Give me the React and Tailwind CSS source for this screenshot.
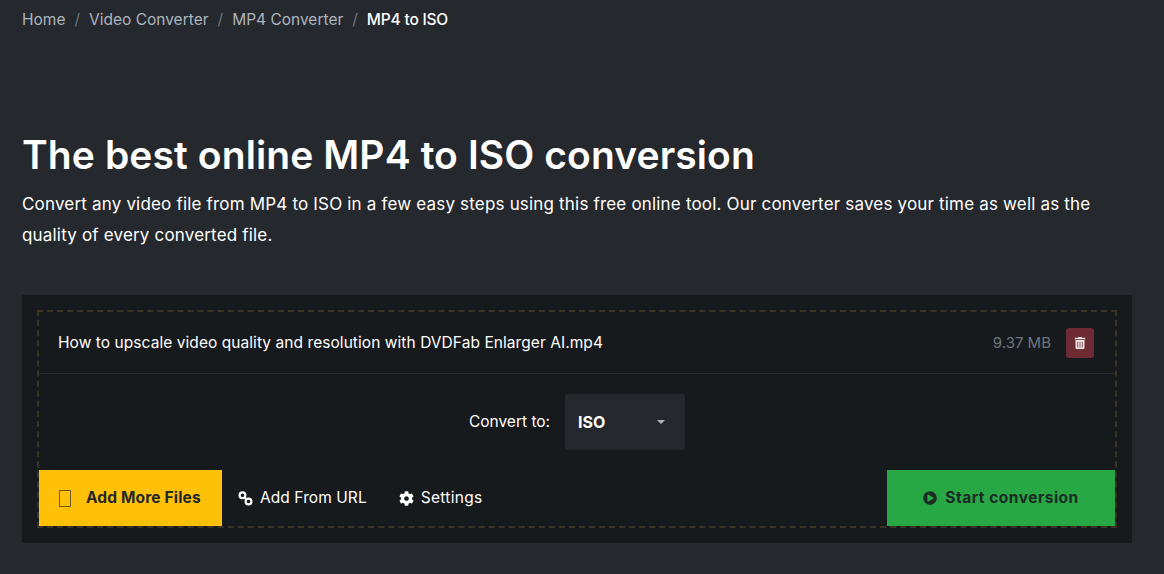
import { FaCog, FaPlayCircle, FaTrashAlt } from "react-icons/fa";

function LinkIcon() {
  return (
    <svg viewBox="0 0 16 16" className="w-[15px] h-[15px]" fill="none" stroke="currentColor" strokeWidth="2.3">
      <circle cx="4.8" cy="4.6" r="3.1" />
      <circle cx="11.2" cy="11.2" r="3.1" />
      <path d="M6.5 6.5l3 3" />
    </svg>
  );
}

function Breadcrumb() {
  const items = ["Home", "Video Converter", "MP4 Converter"];
  return (
    <nav className="flex items-center h-[39px] text-[15.5px] text-[#adb5bd]">
      {items.map((item) => (
        <span key={item} className="flex items-center">
          <span>{item}</span>
          <span className="px-[9px] text-[#6c757d]">/</span>
        </span>
      ))}
      <span className="font-medium text-white tracking-[-0.2px]">MP4 to ISO</span>
    </nav>
  );
}

export default function App() {
  return (
    <div className="h-[574px] overflow-hidden bg-[#25282d] px-[22px] font-['Inter',sans-serif] text-white">
      <Breadcrumb />

      {/* Intro */}
      <h1 className="mt-[89px] text-[39px] leading-[54px] font-semibold tracking-[0.1px]">
        The best online MP4 to ISO conversion
      </h1>
      <p className="mt-[7px] w-[1100px] text-[17px] leading-[31px] tracking-[0.18px]">
        Convert any video file from MP4 to ISO in a few easy steps using this free online tool. Our converter saves your time as well as the quality of every converted file.
      </p>

      {/* Converter box */}
      <div className="mt-[44px] w-[1110px] h-[248px] bg-[#171a1d] pt-[15px] px-[15px]">
        <div className="h-[218px] border-2 border-dashed border-[#3a3424] flex flex-col">
          <div className="h-[62px] shrink-0 flex items-center justify-between pl-[19px] pr-[21px] border-b border-[#25282d]">
            <span className="pt-[1px] text-[15.5px] tracking-[0.06px]">How to upscale video quality and resolution with DVDFab Enlarger AI.mp4</span>
            <div className="flex items-center gap-[15px]">
              <span className="pt-[1px] text-[15px] text-[#6c757d]">9.37 MB</span>
              <button className="w-[28px] h-[30px] rounded-[3px] bg-[#6e2b33] flex items-center justify-center text-[#ece4e2]">
                <FaTrashAlt className="text-[12px]" />
              </button>
            </div>
          </div>

          <div className="h-[96px] shrink-0 flex items-center justify-center gap-[15px]">
            <span className="text-[15.5px]">Convert to:</span>
            <div className="w-[120px] h-[56px] rounded-[3px] bg-[#25282d] flex items-center justify-between pl-[13px] pr-[20px]">
              <span className="text-[16px] font-bold">ISO</span>
              <span className="border-x-[4px] border-t-[4px] border-x-transparent border-t-[#adb5bd]" />
            </div>
          </div>

          <div className="flex-1 flex items-stretch">
            <button className="w-[183px] bg-[#ffc107] flex items-center pl-[20px] text-[#25282d] text-[15.5px] font-bold tracking-[0.15px]">
              <span className="w-[12px] h-[17px] border border-[#6b5a1c] mr-[15px]" />
              Add More Files
            </button>
            <button className="flex items-center gap-[7px] ml-[16px] text-[15.5px] tracking-[0.08px]">
              <LinkIcon />
              Add From URL
            </button>
            <button className="flex items-center gap-[7px] ml-[32px] text-[15.5px] tracking-[0.3px]">
              <FaCog className="text-[15px]" />
              Settings
            </button>
            <button className="ml-auto w-[228px] bg-[#28a745] flex items-center justify-center gap-[8px] text-[#1c2b24] text-[15.5px] font-bold tracking-[0.5px]">
              <FaPlayCircle className="text-[14px]" />
              Start conversion
            </button>
          </div>
        </div>
      </div>
    </div>
  );
}
